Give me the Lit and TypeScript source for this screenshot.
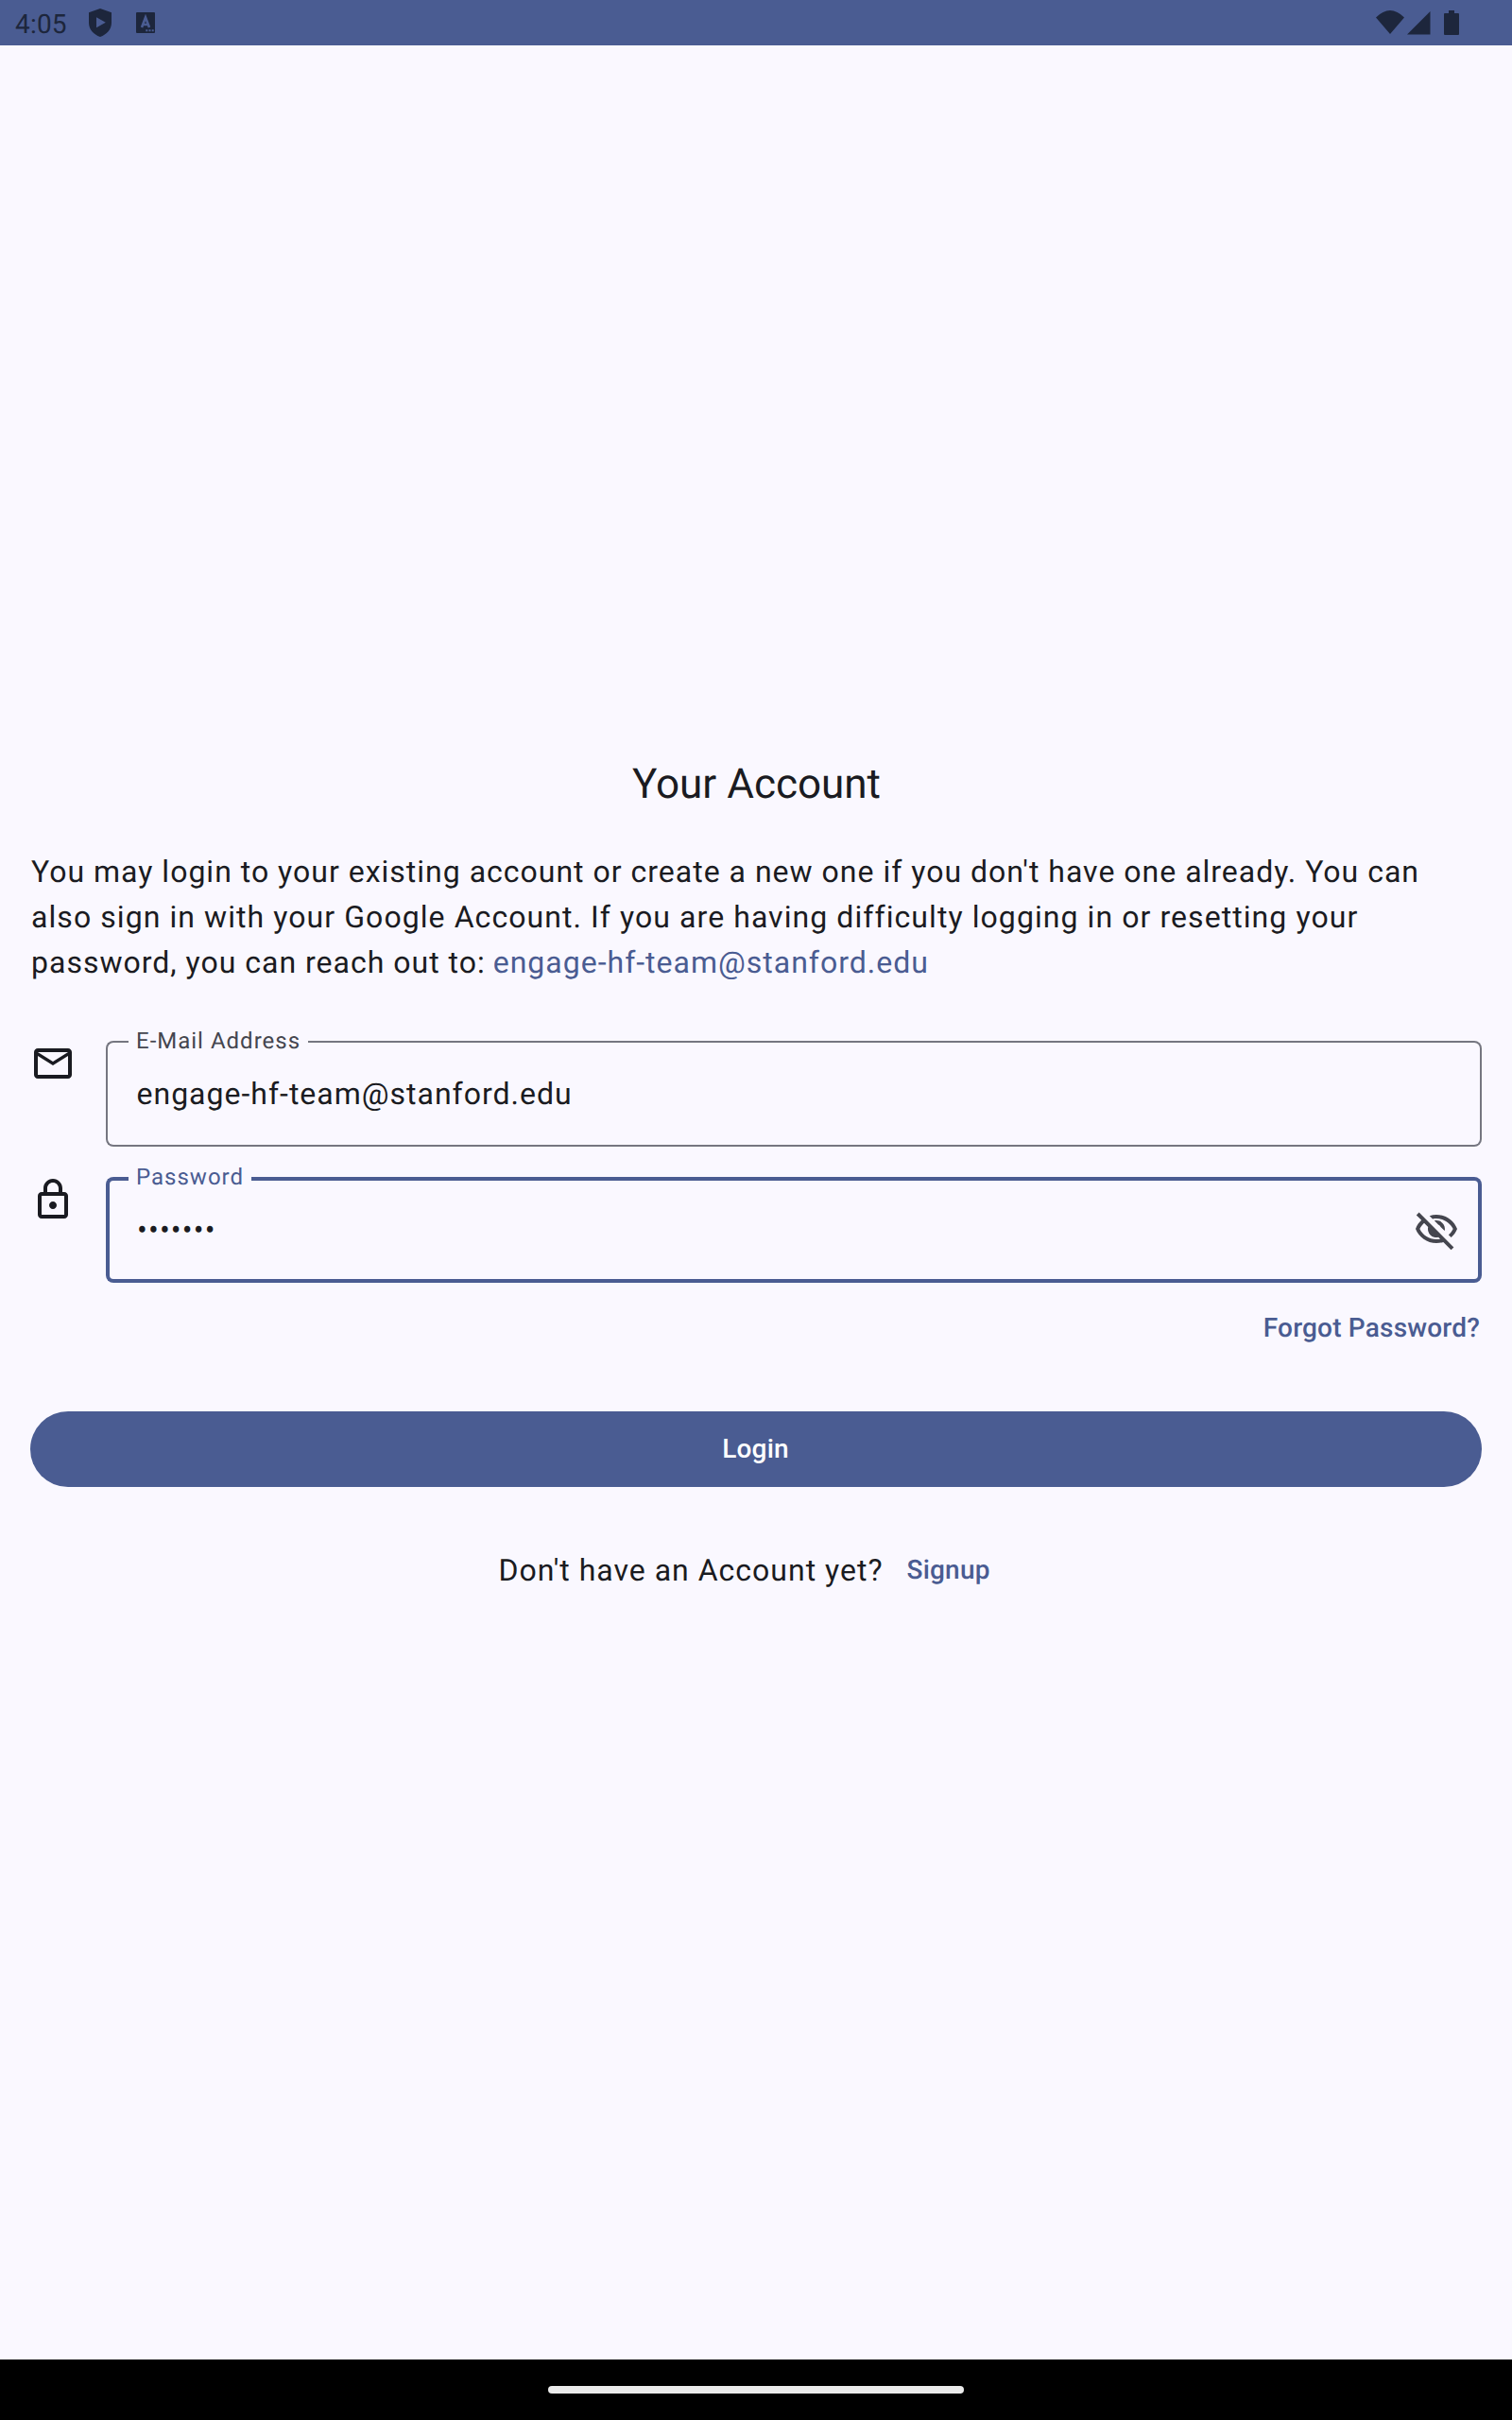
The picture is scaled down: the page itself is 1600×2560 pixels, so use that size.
import { LitElement, html, css } from "lit";
import { customElement } from "lit/decorators.js";

@customElement("status-bar")
class StatusBar extends LitElement {
  static styles = css`
    :host { display: flex; align-items: center; height: 48px; padding: 0 50px 0 16px; box-sizing: border-box; background: #4a5c92; color: #1d263c; font-size: 28px; }
    .time { letter-spacing: .2px; line-height: 44px; padding-top: 4px; }
    .left { display: flex; align-items: center; margin-left: 21px; gap: 24px; }
    .right { display: flex; align-items: center; margin-left: auto; }
    svg { display: block; fill: #1d263c; }
    .letter { fill: none; stroke: #4a5c92; stroke-width: 2.6; }
    .dots { fill: #4a5c92; }
  `;
  render() {
    return html`
      <span class="time">4:05</span>
      <div class="left">
        <svg width="28" height="32" viewBox="0 0 28 32"><path fill-rule="evenodd" d="M14 1L26 5.300V16c0 7-5 12.500-12 15C7 28.500 2 23 2 16V5.300zM10 10.200v11L19.800 15.700z"/></svg>
        <svg width="20" height="22" viewBox="0 0 20 22"><path d="M1 0h18Q20 0 20 1v20Q20 22 19 22H1Q0 22 0 21V1Q0 0 1 0z"/><path class="letter" d="M6 16L10 5.500 14 16M7.300 13h5.400"/><path class="dots" d="M10.300 18.300h2v2h-2zM13.500 18.300h2v2h-2zM16.700 18.300h2v2h-2z"/></svg>
      </div>
      <div class="right">
        <svg width="96" height="28" viewBox="0 0 96 28"><path d="M2 8.500Q17 -6.500 32 8.500L17 26zM59.500 2v24.500H35zM79 1h6v3h4q1 0 1 1v21q0 1-1 1H75q-1 0-1-1V5q0-1 1-1h4z"/></svg>
      </div>`;
  }
}

@customElement("app-root")
class AppRoot extends LitElement {
  static styles = css`
    :host { display: flex; flex-direction: column; height: 2560px; background: #faf8ff; color: #1a1b21; font-family: Roboto, "Liberation Sans", sans-serif; font-size: 32px; letter-spacing: 1px; text-rendering: geometricPrecision; }
    main { flex: 1; display: flex; flex-direction: column; padding: 745px 32px 0; }
    h1 { margin: 0; font-size: 44px; font-weight: 400; line-height: 56px; letter-spacing: 0; text-align: center; padding: 8px 0 0 1px; }
    .intro { margin: 41px 0 0; padding-left: 1px; line-height: 48px; display: flex; flex-direction: column; white-space: nowrap; }
    .wide { letter-spacing: 1.07px; }
    .contact { display: flex; gap: 8px; }
    .link { color: #4a5c92; }
    .row { display: flex; align-items: flex-start; gap: 32px; }
    .row svg { flex: none; width: 48px; height: 48px; fill: #1a1b21; display: block; }
    .first { margin-top: 59px; }
    .second { margin-top: 32px; }
    fieldset { flex: 1; min-width: 0; margin: 0; padding: 0; border: 0; position: relative; height: 112px; display: flex; align-items: center; }
    .frame { position: absolute; inset: 0; display: flex; }
    .edge { box-sizing: border-box; border: 2px solid #757680; }
    .start { width: 24px; border-right: 0; border-radius: 8px 0 0 8px; }
    .notch { box-sizing: border-box; padding: 0 8px; border-bottom: 2px solid #757680; font-size: 24px; letter-spacing: 1px; line-height: 32px; color: #45464f; }
    .notch span { display: block; margin-top: -16px; }
    .end { flex: 1; border-left: 0; border-radius: 0 8px 8px 0; }
    .focused .edge { border-width: 4px; border-color: #4a5c92; }
    .focused .notch { border-bottom: 4px solid #4a5c92; color: #4a5c92; }
    .value { flex: 1; margin-left: 32.500px; line-height: 48px; }
    .focused .value { margin-left: 33px; letter-spacing: 1.150px; }
    fieldset .eye { fill: #45464f; margin-right: 24px; }
    .strong { font-weight: 500; font-size: 28px; letter-spacing: .2px; color: #4a5c92; }
    .forgot { align-self: flex-end; margin-top: 28px; line-height: 40px; padding-right: 2px; }
    button { margin: 68px 0 0; height: 80px; border: 0; border-radius: 40px; background: #4a5c92; color: #fff; font: 500 28px/40px Roboto, "Liberation Sans", sans-serif; letter-spacing: .2px; padding: 0 1px 0 0; }
    .signup { display: flex; justify-content: center; align-items: center; gap: 25px; margin-top: 64px; padding-right: 25px; line-height: 48px; }
    .nav { height: 64px; background: #000; display: flex; align-items: center; justify-content: center; }
    .handle { width: 440px; height: 8px; border-radius: 4px; background: #ebebeb; }
  `;

  field(label: string, value: string, focused: boolean, trailing: unknown = "") {
    return html`
      <fieldset class=${focused ? "focused" : ""}>
        <div class="frame">
          <div class="edge start"></div>
          <div class="notch"><span>${label}</span></div>
          <div class="edge end"></div>
        </div>
        <span class="value">${value}</span>
        ${trailing}
      </fieldset>`;
  }

  render() {
    const eye = html`<svg class="eye" viewBox="0 0 24 24"><path fill-rule="evenodd" d="M12 6c3.790 0 7.170 2.130 8.820 5.500-.59 1.220-1.420 2.270-2.410 3.120l1.410 1.410c1.390-1.230 2.490-2.770 3.180-4.530C21.270 7.110 17 4 12 4c-1.270 0-2.490.2-3.640.57l1.650 1.650C10.660 6.090 11.320 6 12 6zM10.930 7.140L13 9.210c.57.25 1.030.71 1.280 1.280l2.070 2.070c.08-.34.14-.7.14-1.070C16.500 9.010 14.480 7 12 7c-.37 0-.72.05-1.070.14zM1.390 4.220L4.100 6.930C2.750 8.100 1.650 9.700 1 11.500 2.730 15.890 7 19 12 19c1.270 0 2.500-.2 3.660-.51L19.780 22.610 21.190 21.190 2.810 2.810zM5.500 8.330L7.620 10.450A4.500 4.500 0 0 0 13.050 15.880L14.030 16.860C13.370 16.950 12.700 17 12 17 8.210 17 4.830 14.870 3.180 11.500 3.750 10.300 4.550 9.200 5.500 8.330z"/></svg>`;
    return html`
      <status-bar></status-bar>
      <main>
        <h1>Your Account</h1>
        <div class="intro">
          <span>You may login to your existing account or create a new one if you don't have one already. You can</span>
          <span class="wide">also sign in with your Google Account. If you are having difficulty logging in or resetting your</span>
          <span class="contact"><span>password, you can reach out to:</span><span class="link">engage-hf-team@stanford.edu</span></span>
        </div>
        <div class="row first">
          <svg viewBox="0 0 24 24"><path d="M22 6c0-1.100-.9-2-2-2H4c-1.100 0-2 .9-2 2v12c0 1.100.9 2 2 2h16c1.100 0 2-.9 2-2V6zm-2 0l-8 4.990L4 6h16zm0 12H4V8l8 5 8-5v10z"/></svg>
          ${this.field("E-Mail Address", "engage-hf-team@stanford.edu", false)}
        </div>
        <div class="row second">
          <svg viewBox="0 0 24 24"><path d="M18 8h-1V6c0-2.760-2.240-5-5-5S7 3.240 7 6v2H6c-1.100 0-2 .9-2 2v10c0 1.100.9 2 2 2h12c1.100 0 2-.9 2-2V10c0-1.100-.9-2-2-2zM9 6c0-1.660 1.340-3 3-3s3 1.340 3 3v2H9V6zm9 14H6V10h12v10zm-6-3c1.100 0 2-.9 2-2s-.9-2-2-2-2 .9-2 2 .9 2 2 2z"/></svg>
          ${this.field("Password", "•••••••", true, eye)}
        </div>
        <span class="strong forgot">Forgot Password?</span>
        <button>Login</button>
        <div class="signup"><span>Don't have an Account yet?</span><span class="strong">Signup</span></div>
      </main>
      <div class="nav"><div class="handle"></div></div>`;
  }
}
